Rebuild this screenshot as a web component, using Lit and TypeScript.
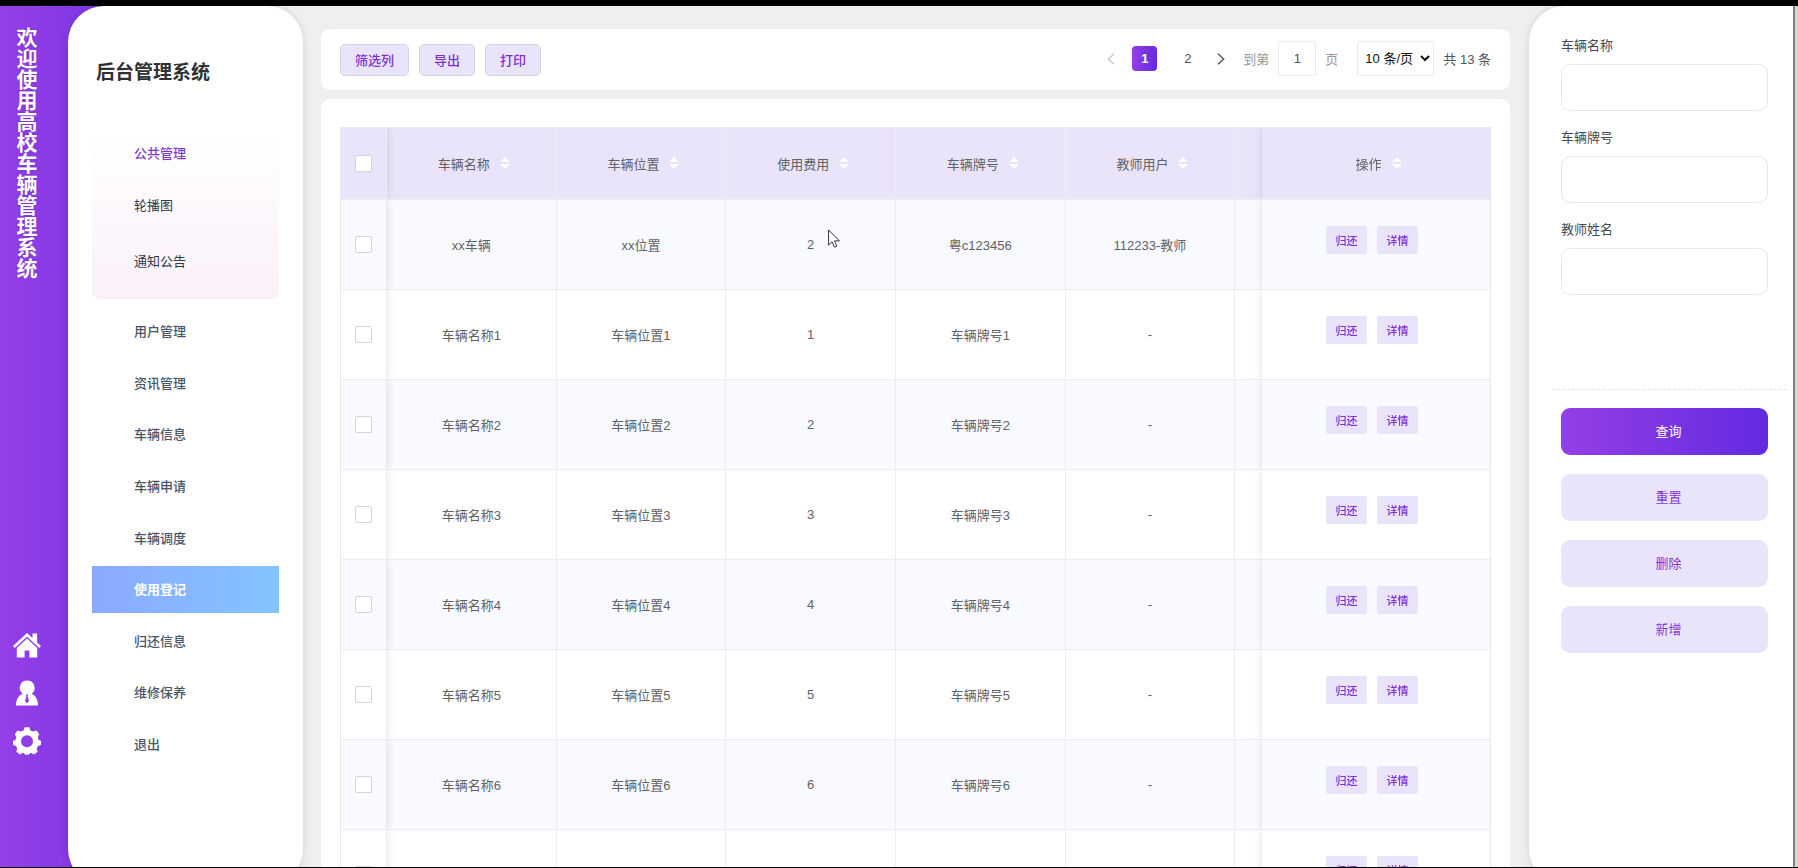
import { LitElement, html, css, svg } from "lit";
import { customElement, state } from "lit/decorators.js";
import { classMap } from "lit/directives/class-map.js";

interface Vehicle {
  name: string;
  place: string;
  fee: string;
  plate: string;
  teacher: string;
}

const VEHICLES: Vehicle[] = [
  { name: "xx车辆", place: "xx位置", fee: "2", plate: "粤c123456", teacher: "112233-教师" },
  ...[1, 2, 3, 4, 5, 6, 7].map((n) => ({
    name: `车辆名称${n}`,
    place: `车辆位置${n}`,
    fee: `${n}`,
    plate: `车辆牌号${n}`,
    teacher: "-",
  })),
];

const COLUMNS = ["车辆名称", "车辆位置", "使用费用", "车辆牌号", "教师用户"];
const PUBLIC_MENU = ["轮播图", "通知公告"];
const MENU = ["用户管理", "资讯管理", "车辆信息", "车辆申请", "车辆调度", "使用登记", "归还信息", "维修保养", "退出"];
const FILTERS = ["车辆名称", "车辆牌号", "教师姓名"];

const carets = html`<svg class="carets" viewBox="0 0 10 12" aria-hidden="true">
  ${svg`<path d="M5 0 10 5H0z M0 7h10l-5 5z" fill="#fff"/>`}
</svg>`;

@customElement("side-rail")
export class SideRail extends LitElement {
  static styles = css`
    :host {
      display: flex;
      flex-direction: column;
      justify-content: space-between;
      box-sizing: border-box;
      padding: 21px 0 112px;
      width: 54px;
      align-items: center;
    }
    .welcome {
      margin: 0;
      padding-right: 4px;
      color: #fff;
      font-size: 21px;
      line-height: 24px;
      font-weight: 700;
      writing-mode: vertical-rl;
      text-shadow: 0 0 2px rgba(60, 20, 120, 0.4);
    }
    .icons {
      display: flex;
      flex-direction: column;
      gap: 20px;
    }
    .icon {
      display: block;
      width: 28px;
      height: 28px;
      fill: #fff;
    }
  `;

  render() {
    return html`
      <h1 class="welcome">欢迎使用高校车辆管理系统</h1>
      <nav class="icons">
        <a href="#home" aria-label="home">
          <svg class="icon" viewBox="0 0 28 28">
            <path d="M14 2 19.5 7V2.6h4.6v8.800L28 15l-1.700 2L14 5.800 1.700 17 0 15z" />
            <path d="M14 7.600 24.200 17v9.400h-7.800v-7h-4.800v7H3.800V17z" />
          </svg>
        </a>
        <a href="#user" aria-label="user">
          <svg class="icon" viewBox="0 0 28 28">
            <path
              fill-rule="evenodd"
              d="M14.3 1.6a7.3 7.3 0 0 1 4.3 13.2c3.700 1.500 6.300 5.500 6.500 11.700H2.900c.200-6.200 2.900-10.200 6.900-11.700A7.300 7.300 0 0 1 14.300 1.600zM13 15.600l.5 2-1.500 4.400L14 24.300l2-2.300-1.300-4.400.5-2z"
            />
          </svg>
        </a>
        <a href="#settings" aria-label="settings">
          <svg class="icon" viewBox="0 0 28 28">
            <path
              fill-rule="evenodd"
              d="M11.600.3h4.800l1 3.200 2.600 1.100 3.600-1 2.600 3.600-1.400 3 .8 2.500 2.400 1.300v3.800l-3.200 1.400-1.100 2.400.9 3.200-3.600 2.600-3-1.600-1.200.6-1.200 1.300h-3.200l-1.400-1.500-1.200-.5-2.900 1.700-3.500-2.600.8-3.200-1.100-2.400L0 17.800V14l2.600-1.300.7-2.500-1.500-3 2.700-3.600 3.500 1 2.600-1.100zM14 8.200a6 6 0 1 0 0 12 6 6 0 0 0 0-12z"
            />
          </svg>
        </a>
      </nav>
    `;
  }
}

@customElement("side-menu")
export class SideMenu extends LitElement {
  @state() private active = "使用登记";

  static styles = css`
    :host {
      display: block;
      padding: 0 24px;
    }
    .title {
      margin: 0;
      padding: 53px 4px 43px;
      color: #303133;
      font-size: 19px;
      line-height: 28px;
      font-weight: 700;
    }
    .group {
      padding-bottom: 10px;
      border-radius: 8px;
      background: linear-gradient(180deg, #fff 0%, #faf0f9 100%);
    }
    .link {
      display: flex;
      align-items: center;
      box-sizing: border-box;
      height: 47px;
      padding: 0 0 2px 42px;
      color: #4a5568;
      font-size: 13px;
      font-weight: 500;
      text-decoration: none;
    }
    .head {
      color: #8338d0;
    }
    .child {
      height: 56px;
      color: #303a48;
      font-weight: 400;
    }
    .menu {
      display: flex;
      flex-direction: column;
      justify-content: space-between;
      height: 460px;
      margin-top: 9px;
    }
    .active {
      color: #fff;
      font-weight: 700;
      background: linear-gradient(90deg, #8ba9ff, #83c4ff);
    }
  `;

  render() {
    return html`
      <h2 class="title">后台管理系统</h2>
      <div class="group">
        <a class="link head" href="#public">公共管理</a>
        ${PUBLIC_MENU.map((t) => html`<a class="link child" href="#public">${t}</a>`)}
      </div>
      <nav class="menu">
        ${MENU.map(
          (t) => html`<a
            class=${classMap({ link: true, active: t === this.active })}
            href="#menu"
            @click=${() => (this.active = t)}
            >${t}</a
          >`
        )}
      </nav>
    `;
  }
}

@customElement("tool-bar")
export class ToolBar extends LitElement {
  static styles = css`
    :host {
      display: flex;
      justify-content: space-between;
      align-items: flex-start;
      box-sizing: border-box;
      height: 61px;
      padding: 12px 19px;
      border-radius: 9px;
      background: #fff;
      font-size: 13px;
    }
    .actions {
      display: flex;
      gap: 10px;
      padding-top: 3px;
    }
    .action {
      height: 32px;
      padding: 0 14px 2px;
      border: 1px solid #d6d2de;
      border-radius: 5px;
      background: #eae4fa;
      color: #7d2fd4;
      font: inherit;
      font-weight: 500;
    }
    .pager {
      display: flex;
      align-items: center;
      height: 35px;
      color: #50555e;
    }
    .arrow,
    .page {
      display: grid;
      place-items: center;
      box-sizing: border-box;
      padding: 0;
      border: 0;
      border-radius: 4px;
      background: none;
      color: #50555e;
      font: inherit;
      height: 25px;
    }
    .arrow {
      width: 24px;
    }
    .chevron {
      width: 8px;
      height: 12px;
      fill: none;
      stroke: currentColor;
      stroke-width: 1.4;
    }
    .page {
      width: 25px;
      margin: 0 9px;
    }
    .off {
      color: #c5c9d0;
    }
    .current {
      background: linear-gradient(90deg, #953fe6, #632ae0);
      color: #fff;
      font-weight: 700;
    }
    .jump {
      display: flex;
      align-items: center;
      gap: 9px;
      margin: 0 19px 0 10px;
      color: #999;
    }
    .number,
    .size {
      box-sizing: border-box;
      height: 35px;
      border: 1px solid #e8e8ee;
      border-radius: 2px;
      background: #fff;
      font: inherit;
    }
    .number {
      width: 38px;
      padding: 0;
      color: #50555e;
      text-align: center;
    }
    .size {
      width: 77px;
      padding: 0 0 0 3px;
      color: #111;
    }
    .total {
      margin-left: 9px;
    }
  `;

  render() {
    return html`
      <div class="actions">
        ${["筛选列", "导出", "打印"].map((t) => html`<button class="action">${t}</button>`)}
      </div>
      <div class="pager">
        <button class="arrow off" aria-label="prev">
          <svg class="chevron" viewBox="0 0 8 12"><path d="M7 .7 1.300 6 7 11.300" /></svg>
        </button>
        <button class="page current">1</button>
        <button class="page">2</button>
        <button class="arrow" aria-label="next">
          <svg class="chevron" viewBox="0 0 8 12"><path d="M1 .7 6.700 6 1 11.300" /></svg>
        </button>
        <label class="jump">到第<input class="number" type="text" value="1" />页</label>
        <select class="size" aria-label="page size">
          <option>10 条/页</option>
        </select>
        <span class="total">共 13 条</span>
      </div>
    `;
  }
}

@customElement("vehicle-table")
export class VehicleTable extends LitElement {
  static styles = css`
    :host {
      display: block;
      padding: 28px 19px;
      border-radius: 9px 9px 0 0;
      background: #fff;
    }
    .scroller {
      overflow: hidden;
      box-sizing: border-box;
      border: 1px solid #e6eaf0;
      border-bottom: 0;
    }
    .table {
      width: 100%;
      min-width: 1292px;
      table-layout: fixed;
      border-collapse: separate;
      border-spacing: 0;
      color: #606266;
      font-size: 13px;
    }
    .tick {
      width: 46px;
    }
    .ops {
      width: 228px;
    }
    .th,
    .td {
      box-sizing: border-box;
      padding: 0;
      border-right: 1px solid #ebeef0;
      border-bottom: 1px solid #ebeef0;
      text-align: center;
      vertical-align: middle;
    }
    .th {
      height: 72px;
      border-bottom-width: 2px;
      background: #eae4fa;
      font-weight: 400;
    }
    .td {
      height: 90px;
      background: #fff;
    }
    .row:nth-child(odd) .td {
      background: #f9faff;
    }
    .left,
    .right {
      position: sticky;
      z-index: 1;
      box-shadow: 0 0 9px rgba(0, 0, 0, 0.12);
    }
    .left {
      left: 0;
      clip-path: inset(0 -10px 0 0);
    }
    .right {
      right: 0;
      border-right: 0;
      clip-path: inset(0 0 0 -10px);
    }
    .label {
      display: inline-flex;
      align-items: center;
    }
    .carets {
      width: 10px;
      height: 12px;
      margin: 0 -5px 0 10px;
    }
    .check {
      display: block;
      appearance: none;
      box-sizing: border-box;
      width: 17px;
      height: 17px;
      margin: 0 auto;
      border: 1px solid #d3d5da;
      border-radius: 2px;
      background: #fff;
    }
    .buttons {
      display: flex;
      justify-content: center;
      gap: 10px;
      padding: 0 8px 9px 0;
    }
    .op {
      width: 41px;
      height: 28px;
      padding: 0 0 1px;
      border: 0;
      border-radius: 2px;
      background: #eae4fa;
      color: #7d2fd4;
      font: inherit;
      font-size: 11px;
      font-weight: 500;
    }
  `;

  render() {
    return html`
      <div class="scroller">
        <table class="table">
          <colgroup>
            <col class="tick" />
            ${COLUMNS.map(() => html`<col />`)}
            <col />
            <col class="ops" />
          </colgroup>
          <thead>
            <tr>
              <th class="th left"><input class="check" type="checkbox" aria-label="all" /></th>
              ${COLUMNS.map((c) => html`<th class="th"><span class="label">${c}${carets}</span></th>`)}
              <th class="th"></th>
              <th class="th right"><span class="label">操作${carets}</span></th>
            </tr>
          </thead>
          <tbody>
            ${VEHICLES.map(
              (v) => html`<tr class="row">
                <td class="td left"><input class="check" type="checkbox" aria-label=${v.name} /></td>
                <td class="td">${v.name}</td>
                <td class="td">${v.place}</td>
                <td class="td">${v.fee}</td>
                <td class="td">${v.plate}</td>
                <td class="td">${v.teacher}</td>
                <td class="td"></td>
                <td class="td right">
                  <div class="buttons">
                    <button class="op">归还</button>
                    <button class="op">详情</button>
                  </div>
                </td>
              </tr>`
            )}
          </tbody>
        </table>
      </div>
    `;
  }
}

@customElement("search-panel")
export class SearchPanel extends LitElement {
  static styles = css`
    :host {
      display: block;
      padding: 30px 6px 0 23px;
      font-size: 13px;
    }
    .fields {
      display: grid;
      gap: 17px;
      padding: 0 19px 0 9px;
    }
    .field {
      display: grid;
      gap: 8px;
      color: #454a55;
      line-height: 20px;
    }
    .input {
      box-sizing: border-box;
      width: 100%;
      height: 47px;
      padding: 0 12px;
      border: 1px solid #e7e7ef;
      border-radius: 9px;
      background: #fff;
      font: inherit;
    }
    .buttons {
      display: grid;
      gap: 19px;
      margin-top: 94px;
      padding: 18px 19px 0 9px;
      border-top: 1px dashed #e6e6e6;
    }
    .button {
      height: 47px;
      border: 0;
      border-radius: 9px;
      padding: 0 0 2px 8px;
      background: #eae4fa;
      color: #8238d6;
      font: inherit;
    }
    .primary {
      background: linear-gradient(90deg, #953fe6, #632ae0);
      color: #fff;
    }
  `;

  render() {
    return html`
      <div class="fields">
        ${FILTERS.map((f) => html`<label class="field">${f}<input class="input" type="text" /></label>`)}
      </div>
      <div class="buttons">
        <button class="button primary">查询</button>
        <button class="button">重置</button>
        <button class="button">删除</button>
        <button class="button">新增</button>
      </div>
    `;
  }
}

@customElement("app-root")
export class AppRoot extends LitElement {
  static styles = css`
    :host {
      display: grid;
      grid-template-columns: 68px 235px minmax(0, 1fr) 264px 5px;
      grid-template-rows: minmax(0, 1fr);
      box-sizing: border-box;
      height: 100vh;
      overflow: hidden;
      position: relative;
      border-top: 6px solid #000;
      border-bottom: 1px solid #000;
      background: linear-gradient(90deg, #953fe8 0, #7c36e4 110px, #efefef 110px);
      font-family: "Liberation Sans", "Noto Sans CJK SC", sans-serif;
    }
    .panel {
      margin-bottom: -18px;
      background: #fff;
      box-shadow: 0 0 8px rgba(0, 0, 0, 0.12);
    }
    .menu {
      border-radius: 36px;
    }
    .search {
      border-radius: 36px 0 0 36px;
    }
    .main {
      display: flex;
      flex-direction: column;
      gap: 9px;
      overflow: hidden;
      padding: 23px 19px 0 18px;
    }
    .card {
      flex: none;
    }
    .edge {
      border-left: 2px solid #808080;
      background: #d9d9d9;
      z-index: 1;
    }
    .cursor {
      position: absolute;
      left: 828px;
      top: 223px;
      width: 12px;
      height: 19px;
      z-index: 2;
    }
  `;

  render() {
    return html`
      <side-rail></side-rail>
      <side-menu class="panel menu"></side-menu>
      <main class="main">
        <tool-bar class="card"></tool-bar>
        <vehicle-table class="card"></vehicle-table>
      </main>
      <search-panel class="panel search"></search-panel>
      <div class="edge"></div>
      <svg class="cursor" viewBox="0 0 12 19" aria-hidden="true">
        <path
          d="M.600.900v15.200l3.500-3.300 2.300 5.300 2.400-1-2.300-5.200h4.900z"
          fill="#fff"
          stroke="#333"
          stroke-width="1"
        />
      </svg>
    `;
  }
}
